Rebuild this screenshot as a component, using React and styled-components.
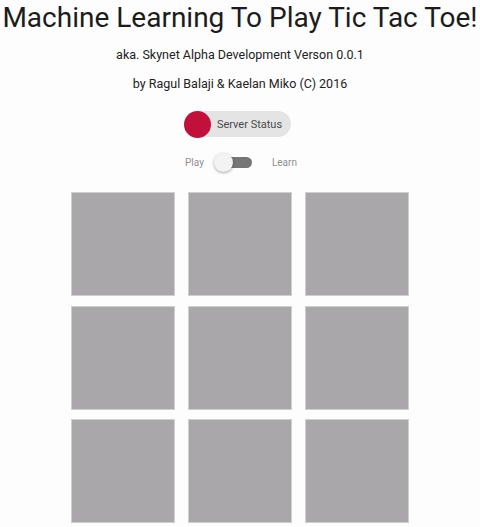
import React, { useState } from "react";
import styled, { createGlobalStyle } from "styled-components";

const GlobalStyle = createGlobalStyle`
  html, body {
    margin: 0;
    padding: 0;
    background: #fdfdfd;
    overflow: hidden;
  }
  body {
    font-family: Roboto, "Liberation Sans", sans-serif;
    color: #212121;
  }
`;

const Page = styled.div`
  display: flex;
  flex-direction: column;
  align-items: center;
  width: 480px;
`;

const Title = styled.h1`
  margin: 0;
  padding-top: 1px;
  font-size: 28px;
  font-weight: 400;
  line-height: 34px;
  white-space: nowrap;
  color: #1c1c1c;
`;

const Subtitle = styled.p`
  margin: ${(p) => p.$top}px 0 0;
  font-size: 12.5px;
  line-height: 16px;
  color: #222;
`;

const Chip = styled.div`
  display: flex;
  align-items: center;
  margin-top: 19px;
  margin-right: 5px;
  height: 26px;
  padding-right: 9px;
  border-radius: 13px;
  background: #e4e4e4;
  font-size: 11px;
  font-weight: 400;
  color: #4a4a4a;
`;

const StatusDot = styled.span`
  width: 27px;
  height: 27px;
  border-radius: 50%;
  background: ${(p) => (p.$online ? "#2e7d32" : "#c1113a")};
  margin-right: 6px;
`;

const SwitchRow = styled.label`
  display: flex;
  align-items: center;
  gap: 11px;
  margin-top: 20px;
  margin-left: 2px;
  font-size: 10px;
  color: #8f8f8f;
  cursor: pointer;
  user-select: none;
`;

const Track = styled.span`
  position: relative;
  display: inline-block;
  width: 34px;
  height: 11px;
  margin: 0 9px 0 3px;
  border-radius: 6px;
  background: ${(p) => (p.$on ? "#84c7c1" : "#767676")};
`;

const Knob = styled.span`
  position: absolute;
  top: -4px;
  left: ${(p) => (p.$on ? "15px" : "-4px")};
  width: 19px;
  height: 19px;
  border-radius: 50%;
  background: ${(p) => (p.$on ? "#26a69a" : "#f3f3f3")};
  box-shadow: 0 1px 3px rgba(0, 0, 0, 0.35);
  transition: left 0.2s;
`;

const Board = styled.div`
  display: grid;
  grid-template-columns: repeat(3, 104px);
  grid-auto-rows: 104px;
  column-gap: 13px;
  row-gap: 9.5px;
  margin-top: 24px;
`;

const Cell = styled.button`
  box-sizing: border-box;
  margin: 0;
  padding: 0;
  border: 1px solid #cfcfd0;
  background: #a9a7aa;
  font-family: inherit;
  font-size: 64px;
  color: #fff;
  cursor: pointer;
`;

export default function App() {
  const [learn, setLearn] = useState(false);
  const [cells, setCells] = useState(Array(9).fill(""));

  const play = (i) => {
    if (cells[i]) return;
    const next = cells.slice();
    next[i] = "X";
    setCells(next);
  };

  return (
    <Page>
      <GlobalStyle />
      <Title>Machine Learning To Play Tic Tac Toe!</Title>
      <Subtitle $top={12}>aka. Skynet Alpha Development Verson 0.0.1</Subtitle>
      <Subtitle $top={13}>by Ragul Balaji &amp; Kaelan Miko (C) 2016</Subtitle>
      <Chip>
        <StatusDot $online={false} />
        Server Status
      </Chip>
      <SwitchRow onClick={() => setLearn(!learn)}>
        Play
        <Track $on={learn}>
          <Knob $on={learn} />
        </Track>
        Learn
      </SwitchRow>
      <Board>
        {cells.map((c, i) => (
          <Cell key={i} onClick={() => play(i)}>
            {c}
          </Cell>
        ))}
      </Board>
    </Page>
  );
}
